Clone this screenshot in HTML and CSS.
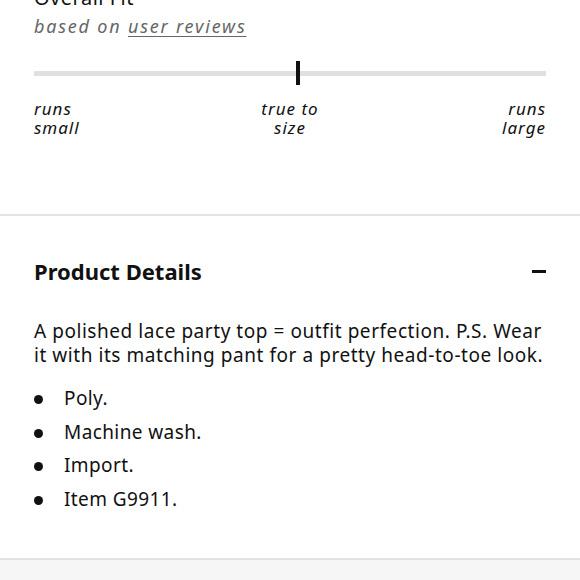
FILE: index.html
```html
<!DOCTYPE html>
<html>
<head>
<meta charset="utf-8">
<link rel="stylesheet" href="styles.css">
</head>
<body>
<section class="fit">
  <h2 class="fit-title">Overall Fit</h2>
  <p class="fit-sub">based on <a class="fit-link">user reviews</a></p>
  <div class="track"><span class="marker"></span></div>
  <div class="labels">
    <span class="lbl left">runs<br>small</span>
    <span class="lbl mid">true to<br>size</span>
    <span class="lbl right">runs<br>large</span>
  </div>
</section>
<section class="details">
  <div class="details-head">
    <h2 class="details-title">Product Details</h2>
    <span class="minus"></span>
  </div>
  <p class="desc">A polished lace party top = outfit perfection. P.S. Wear it with its matching pant for a pretty head-to-toe look.</p>
  <ul class="bullets">
    <li>Poly.</li>
    <li>Machine wash.</li>
    <li>Import.</li>
    <li>Item G9911.</li>
  </ul>
</section>
<div class="footer"></div>
</body>
</html>
```
FILE: styles.css
```css
html, body { margin: 0; padding: 0; background: #fff; }
body { font-family: "Noto Sans", "Open Sans", sans-serif; color: #111; overflow: hidden; }
.fit { padding: 0 34px; height: 228px; box-sizing: border-box; margin-top: -14px; }
.fit-title { margin: 0; font-weight: 400; font-size: 20px; line-height: 24px; letter-spacing: 0.5px; }
.fit-sub { margin: 4px 0 0; font-style: italic; font-size: 18px; color: #666; letter-spacing: 1.8px; line-height: 24px; }
.fit-link { text-decoration: underline; text-underline-offset: 3px; }
.track { position: relative; height: 5px; background: #e0e0e0; margin-top: 33px; }
.marker { position: absolute; left: 262px; top: -10px; width: 4px; height: 24px; background: #111; }
.labels { display: grid; grid-template-columns: 1fr auto 1fr; margin-top: 23px; font-style: italic; font-size: 17px; line-height: 19px; letter-spacing: 1px; }
.lbl.left { text-align: left; }
.lbl.mid { text-align: center; }
.lbl.right { text-align: right; }
.details { border-top: 2px solid #e4e4e4; padding: 0 34px; height: 346px; box-sizing: border-box; border-bottom: 2px solid #e2e2e2; }
.details-head { display: flex; justify-content: space-between; align-items: center; margin-top: 41px; }
.details-title { margin: 0; font-size: 22px; font-weight: 700; line-height: 28px; color: #111; }
.minus { width: 14px; height: 3px; background: #111; }
.desc { margin: 34px 0 0; font-size: 19px; line-height: 24px; letter-spacing: 0.55px; }
.bullets { list-style: none; margin: 15px 0 0; padding: 0; font-size: 19px; letter-spacing: 0.4px; }
.bullets li { position: relative; padding-left: 30px; line-height: 33.5px; }
.bullets li::before { content: ""; position: absolute; left: 0; top: 13px; width: 9px; height: 9px; border-radius: 50%; background: #111; }
.footer { background: #f6f6f6; height: 40px; }
```
